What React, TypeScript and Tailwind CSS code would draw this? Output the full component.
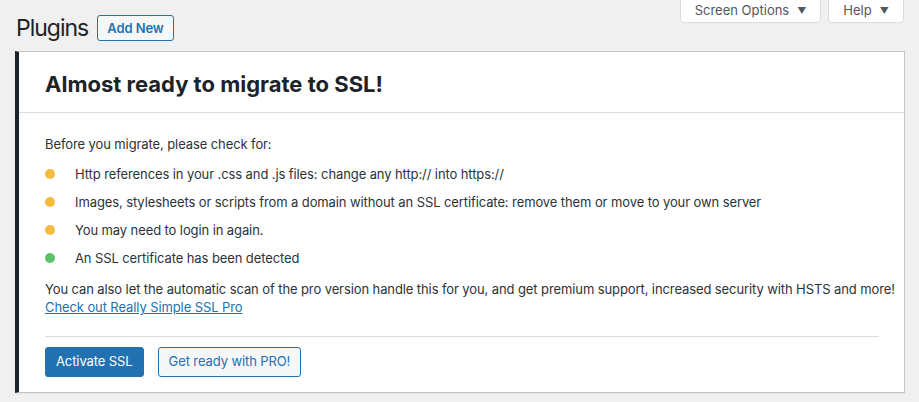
import React from "react";

const font = { fontFamily: "Inter, 'Liberation Sans', sans-serif" };

function Dot({ color }: { color: string }) {
  return <span className={`inline-block w-[10px] h-[10px] rounded-full shrink-0 ${color}`} />;
}

export default function App() {
  const items: { c: string; t: string }[] = [
    { c: "bg-[#f4bb3f]", t: "Http references in your .css and .js files: change any http:// into https://" },
    { c: "bg-[#f4bb3f]", t: "Images, stylesheets or scripts from a domain without an SSL certificate: remove them or move to your own server" },
    { c: "bg-[#f4bb3f]", t: "You may need to login in again." },
    { c: "bg-[#5cc169]", t: "An SSL certificate has been detected" },
  ];
  return (
    <div className="w-[919px] h-[402px] bg-[#f0f0f1] pl-[15px] pr-[14px] overflow-hidden" style={font}>
      <div className="flex justify-between items-start">
        <div className="flex items-center gap-[9px] pt-[15px]">
          <h1 className="text-[23px] leading-[26px] tracking-[-1px] text-[#1d2327] font-normal ml-[1px]">Plugins</h1>
          <button className="h-[26px] px-[9px] border border-[#2271b1] rounded-[3px] bg-[#f6f7f7] text-[#2271b1] text-[13px] font-semibold leading-none tracking-[-0.1px]">
            Add New
          </button>
        </div>
        <div className="flex gap-[7px] mr-[1px]">
          <button className="h-[23px] w-[141px] bg-white border border-t-0 border-[#dcdcde] rounded-b-[4px] text-[#50575e] text-[13px] flex items-center justify-center gap-[8px]">
            Screen Options <span className="text-[9px]">▼</span>
          </button>
          <button className="h-[23px] w-[76px] bg-white border border-t-0 border-[#dcdcde] rounded-b-[4px] text-[#50575e] text-[13px] flex items-center justify-center gap-[8px]">
            Help <span className="text-[9px]">▼</span>
          </button>
        </div>
      </div>
      <div className="mt-[10px] bg-white border border-[#c3c4c7] border-l-[4px] border-l-[#1d2327] shadow-[0_1px_1px_rgba(0,0,0,0.04)]">
        <div className="pt-[20px] pb-[16px] pl-[26px] border-b border-[#dcdcde]">
          <h2 className="text-[22px] leading-[24px] font-bold text-[#1d2327]">Almost ready to migrate to SSL!</h2>
        </div>
        <div className="pl-[26px] pr-[25px] pt-[21px] pb-[15px] text-[13px] text-[#2c3338] tracking-[-0.1px]">
          <p className="leading-[20px]">Before you migrate, please check for:</p>
          <ul className="mt-[10px] flex flex-col gap-[8px]">
            {items.map((it, i) => (
              <li key={i} className="flex items-center gap-[20px] leading-[20px]">
                <Dot color={it.c} />
                <span>{it.t}</span>
              </li>
            ))}
          </ul>
          <p className="mt-[12px] leading-[18px] whitespace-nowrap">
            You can also let the automatic scan of the pro version handle this for you, and get premium support, increased security with HSTS and more!
            <br />
            <a className="text-[#2271b1] underline" href="#">Check out Really Simple SSL Pro</a>
          </p>
          <div className="mt-[20px] border-t border-[#dcdcde]" />
          <div className="mt-[10px] flex gap-[14px]">
            <button className="h-[30px] px-[10px] bg-[#2271b1] border border-[#2271b1] rounded-[3px] text-white text-[13px]">Activate SSL</button>
            <button className="h-[30px] px-[10px] bg-[#f6f7f7] border border-[#2271b1] rounded-[3px] text-[#2271b1] text-[13px]">Get ready with PRO!</button>
          </div>
        </div>
      </div>
    </div>
  );
}
